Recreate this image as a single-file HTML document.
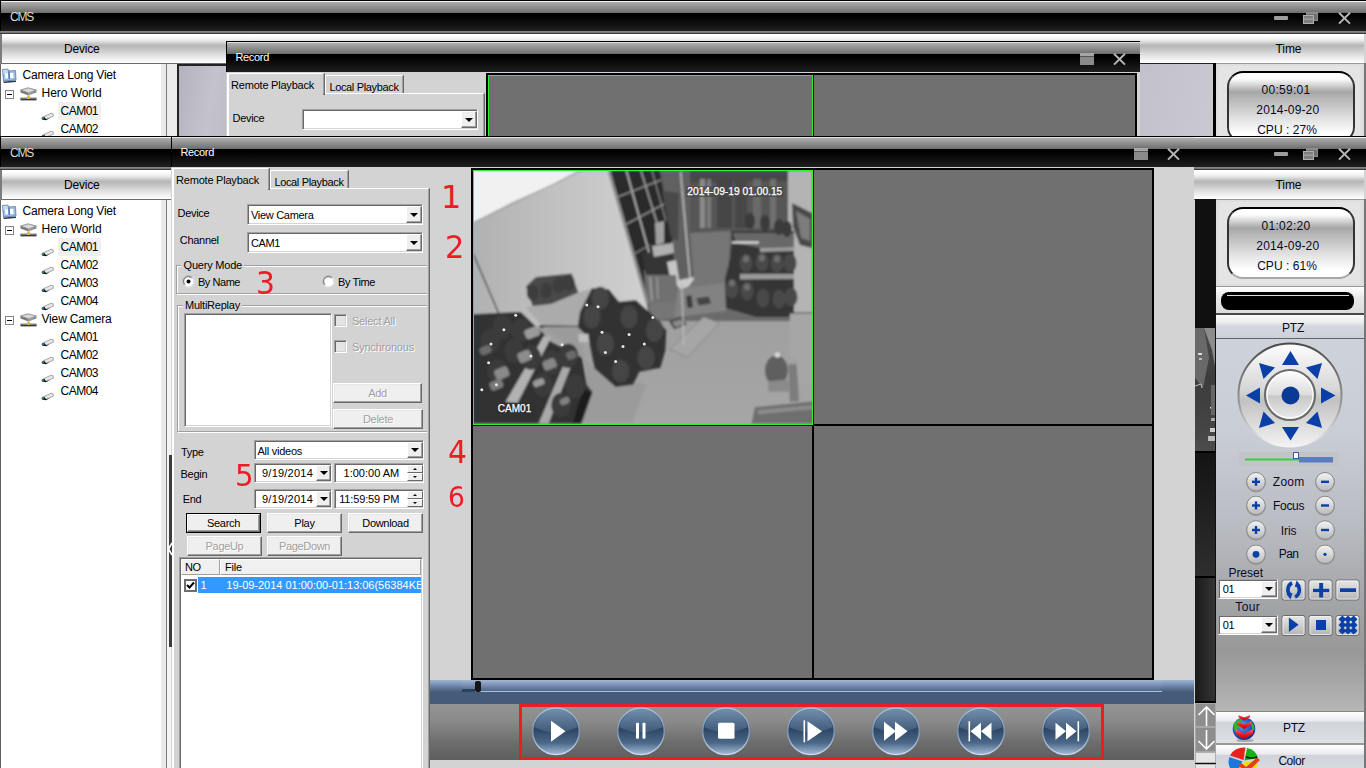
<!DOCTYPE html><html><head><meta charset="utf-8"><title>CMS</title><style>
html,body{margin:0;padding:0}
body{width:1366px;height:768px;overflow:hidden;position:relative;background:#d3d3d3;font-family:"Liberation Sans",sans-serif}
.t{position:absolute;white-space:pre}
.a{position:absolute}
.win{position:absolute;left:0;width:1366px;overflow:hidden}
.cmstb{position:absolute;left:0;top:0;width:1366px;height:34px;background:linear-gradient(to bottom,#000 0,#000 1px,#f4f4f4 1px,#f4f4f4 2px,#aeaeae 2px,#6c6c6c 13px,#000 13px,#000 16px,#1f1f1f 31px,#8c8c8c 31px,#6e6e6e 33px,#3a3a3a 33px,#3a3a3a 34px)}
.rectb{position:absolute;height:31px;background:linear-gradient(to bottom,#000 0,#000 1px,#e0e0e0 1px,#e0e0e0 2px,#aeaeae 2px,#6c6c6c 13px,#000 13px,#000 16px,#1f1f1f 31px)}
.hdr{position:absolute;height:29px;background:linear-gradient(to bottom,#fff 0,#fff 2px,#ececec 6px,#b6b6b6 11.5px,#bcbcbc 13px,#e4e4e4 22px,#f8f8f8 27px,#fff 29px)}
.combo{position:absolute;background:#fff;box-sizing:border-box;border:1px solid;border-color:#a0a0a0 #fff #fff #a0a0a0;box-shadow:inset 1px 1px 0 #696969, inset -1px -1px 0 #d3d3d3}
.cbtn{position:absolute;right:0px;top:1px;bottom:1px;width:16px;background:#efefef;box-sizing:border-box;border:1px solid;border-color:#fff #696969 #696969 #fff;box-shadow:inset -1px -1px 0 #a0a0a0}
.cbtn:after{content:"";position:absolute;left:3px;top:50%;margin-top:-2px;border:4px solid transparent;border-top:4px solid #000;border-bottom:0;width:0;height:0}
.btn{position:absolute;background:#efefef;box-sizing:border-box;border:1px solid;border-color:#fff #696969 #696969 #fff;box-shadow:inset -1px -1px 0 #a0a0a0, inset 1px 1px 0 #e8e8e8}
.sunk{position:absolute;background:#fff;box-sizing:border-box;border:1px solid;border-color:#a0a0a0 #fff #fff #a0a0a0;box-shadow:inset 1px 1px 0 #696969, inset -1px -1px 0 #d3d3d3}
.grp{position:absolute;box-sizing:border-box;border:1px solid #fff;box-shadow:inset 1px 1px 0 #a0a0a0;border-top-color:#a0a0a0;border-left-color:#a0a0a0;}
.grp2{position:absolute;box-sizing:border-box;border:1px solid #a0a0a0;box-shadow:1px 1px 0 #fff, inset 1px 1px 0 #fff}
</style></head><body>
<div class="win" style="top:0px;height:136px;background:#d3d3d3">
<div class="cmstb"></div>
<div style="position:absolute;left:0px;top:1px;width:1px;height:30px;background:#000"></div>
<div class="t" style="left:10.00px;top:10.84px;font:12px/1 'Liberation Sans',sans-serif;color:#dcdcdc;letter-spacing:-1.224px;">CMS</div>
<div style="position:absolute;left:1274px;top:16px;width:14px;height:4px;background:#9d9d9d;border-radius:1px"></div><svg class="a" style="left:1302px;top:11px" width="17" height="14" viewBox="0 0 17 14"><rect x="4.5" y="1.5" width="11" height="8" fill="#6e6e6e" stroke="#8c8c8c"/><rect x="4" y="1" width="12" height="2" fill="#8c8c8c"/><rect x="1.5" y="4.5" width="10" height="8" fill="#7e7e7e" stroke="#b0b0b0"/><rect x="2" y="7.6" width="9" height="1" fill="#b0b0b0"/></svg><svg class="a" style="left:1338px;top:12px" width="13" height="13" viewBox="0 0 13 13"><path d="M1 0.8 L12 11.6 M12 0.8 L1 11.6" stroke="#b6b6b6" stroke-width="2" fill="none"/></svg>
<div style="position:absolute;left:0px;top:34px;width:2px;height:30px;background:#7c7c7c"></div>
<div class="hdr" style="left:2px;top:34px;width:1362px"></div>
<div style="position:absolute;left:2px;top:63px;width:1362px;height:1px;background:#6a6a6a"></div>
<div class="t" style="left:1275.50px;top:43.14px;font:12px/1 'Liberation Sans',sans-serif;color:#000;letter-spacing:-0.059px;">Time</div>
<div class="t" style="left:63.95px;top:43.14px;font:12px/1 'Liberation Sans',sans-serif;color:#000;letter-spacing:-0.198px;">Device</div>
<div style="position:absolute;left:0px;top:64px;width:1px;height:1000px;background:#606060"></div>
<div style="position:absolute;left:1px;top:64px;width:160px;height:1000px;background:#fff"></div>
<div style="position:absolute;left:161px;top:64px;width:5px;height:1000px;background:#e9e9e9"></div>
<div style="position:absolute;left:166px;top:64px;width:1px;height:1000px;background:#7a7a7a"></div>
<div style="position:absolute;left:167px;top:64px;width:4px;height:1000px;background:#f4f4f4"></div>
<svg class="a" style="left:1px;top:67.9px" width="16" height="15" viewBox="0 0 16 15"><path d="M2 13.5 L15 12.5 L15 14 L3 15Z" fill="#26364a"/><path d="M1.5 1.5 L7 1 L7.5 3 L14.5 2.5 L15 12 L2.5 13 Z" fill="#9cbce0" stroke="#5a7aa6" stroke-width=".8"/><path d="M2 2 L6.5 1.5 L7 5 L2.3 6Z" fill="#c4d8f0"/><rect x="4.2" y="5.5" width="3" height="5" fill="#fff" transform="rotate(-4 5 8)"/><rect x="9" y="4.8" width="3.4" height="5.4" fill="#fff" transform="rotate(-4 10 8)"/><rect x="7.4" y="3.5" width="1.4" height="7.5" fill="#4a6fa8" transform="rotate(-4 8 7)"/></svg>
<div class="t" style="left:22.60px;top:69.24px;font:12px/1 'Liberation Sans',sans-serif;color:#000;letter-spacing:-0.195px;">Camera Long Viet</div>
<div style="position:absolute;left:5px;top:90.4px;width:9px;height:9px;box-sizing:border-box;border:1px solid #848484;background:#fff"></div>
<div style="position:absolute;left:7px;top:94.4px;width:5px;height:1px;background:#000"></div>
<svg class="a" style="left:20px;top:87.4px" width="17" height="14" viewBox="0 0 17 14"><path d="M0.5 3 L8 0.8 L16.5 3 L8.5 6 Z" fill="#d8d8d8" stroke="#777" stroke-width=".7"/><path d="M0.5 3 L8.5 6 L8.5 8.6 L0.5 5.4 Z" fill="#7a7a7a"/><path d="M8.5 6 L16.5 3 L16.5 5.4 L8.5 8.6 Z" fill="#9a9a9a"/><rect x="13.5" y="4.2" width="2" height="1.6" fill="#7080c0"/><rect x="7.4" y="8.4" width="2.2" height="3" fill="#e8b020"/><rect x="0.5" y="10.8" width="16" height="2.6" fill="#3c3c3c"/><rect x="0.5" y="10.8" width="16" height="1" fill="#8a8a8a"/><rect x="7.4" y="10.4" width="2.2" height="1.6" fill="#f0c040"/></svg>
<div class="t" style="left:41.50px;top:87.24px;font:12px/1 'Liberation Sans',sans-serif;color:#000;letter-spacing:-0.037px;">Hero World</div>
<div style="position:absolute;left:58px;top:102.4px;width:43px;height:18px;background:#f0f0f0"></div>
<svg class="a" style="left:40.5px;top:111.9px" width="14" height="9" viewBox="0 0 14 9"><path d="M3 4.4 L10.2 1.2 L12.2 1.8 L12.4 4.2 L5.2 7.2 L2.4 7 Z" fill="#e6e6e6" stroke="#777" stroke-width=".6"/><path d="M0.6 5.8 L3 4.6 L5.2 7.2 L9 5.9 L5 8.2 L1 7.6 Z" fill="#141414"/><rect x="1.2" y="5.3" width="2" height="1.5" fill="#1fa4b4"/></svg>
<div class="t" style="left:60.50px;top:105.24px;font:12px/1 'Liberation Sans',sans-serif;color:#000;letter-spacing:-0.503px;">CAM01</div>
<svg class="a" style="left:40.5px;top:129.9px" width="14" height="9" viewBox="0 0 14 9"><path d="M3 4.4 L10.2 1.2 L12.2 1.8 L12.4 4.2 L5.2 7.2 L2.4 7 Z" fill="#e6e6e6" stroke="#777" stroke-width=".6"/><path d="M0.6 5.8 L3 4.6 L5.2 7.2 L9 5.9 L5 8.2 L1 7.6 Z" fill="#141414"/><rect x="1.2" y="5.3" width="2" height="1.5" fill="#1fa4b4"/></svg>
<div class="t" style="left:60.50px;top:123.24px;font:12px/1 'Liberation Sans',sans-serif;color:#000;letter-spacing:-0.503px;">CAM02</div>
<div style="position:absolute;left:1140px;top:63px;width:73px;height:600px;background:linear-gradient(100deg,#c2c0ca,#cccad2 60%,#bdbbc5)"></div>
<div style="position:absolute;left:1140px;top:63px;width:76px;height:1px;background:#222"></div>
<div style="position:absolute;left:1213px;top:63px;width:3px;height:600px;background:#000"></div>
<div style="position:absolute;left:1216px;top:63px;width:148px;height:88px;background:#dedede;box-sizing:border-box;border-top:1px solid #9a9a9a;border-bottom:1px solid #9a9a9a"></div>
<div style="position:absolute;left:1219px;top:66px;width:142px;height:82px;background:#e4e4e4"></div>
<div style="position:absolute;left:1364px;top:63px;width:2px;height:600px;background:#777"></div>
<div style="position:absolute;left:1227px;top:71px;width:128px;height:72px;box-sizing:border-box;border:2px solid;border-color:#000 #333 #a8a8a8 #333;border-radius:16px;background:linear-gradient(to bottom,#fff 0,#fff 8%,#a6a6a6 28%,#b4b4b4 36%,#e6e6e6 70%,#fff 90%)"></div>
<div class="t" style="left:1261.50px;top:83.74px;font:12px/1 'Liberation Sans',sans-serif;color:#0a0a1e;letter-spacing:0.285px;">00:59:01</div>
<div class="t" style="left:1256.30px;top:104.24px;font:12px/1 'Liberation Sans',sans-serif;color:#0a0a1e;letter-spacing:0.161px;">2014-09-20</div>
<div class="t" style="left:1257.15px;top:123.84px;font:12px/1 'Liberation Sans',sans-serif;color:#0a0a1e;letter-spacing:0.038px;">CPU : 27%</div>
<div style="position:absolute;left:167px;top:64px;width:10px;height:100px;background:#ececec"></div>
<div style="position:absolute;left:177px;top:64px;width:60px;height:100px;background:linear-gradient(100deg,#b4b2be,#c4c2cc 50%,#bab8c2);box-sizing:border-box;border-left:2px solid #222;border-top:2px solid #222"></div>
<div class="a" style="left:226px;top:41px;width:914px;height:200px;background:#d3d3d3;overflow:hidden">
<div class="rectb" style="left:0;top:0;width:914px"></div>
<div style="position:absolute;left:0px;top:0px;width:1px;height:31px;background:#000"></div>
<div class="t" style="left:9.40px;top:10.69px;font:11px/1 'Liberation Sans',sans-serif;color:#fff;letter-spacing:-0.311px;">Record</div>
<svg class="a" style="left:854px;top:12px" width="14" height="12" viewBox="0 0 14 12"><rect x="0" y="0" width="14" height="12" fill="#8a8a8a"/><rect x="0" y="0" width="14" height="3" fill="#a6a6a6"/><rect x="0" y="3" width="14" height="1" fill="#555"/></svg>
<svg class="a" style="left:887px;top:12px" width="13" height="13" viewBox="0 0 13 13"><path d="M1 0.8 L12 11.6 M12 0.8 L1 11.6" stroke="#b6b6b6" stroke-width="2" fill="none"/></svg>
<div style="position:absolute;left:1px;top:52px;width:258px;height:2000px;box-sizing:border-box;border-left:2px solid #fff;border-top:1px solid #fff;border-right:2px solid #696969;border-right-color:#696969;background:#d3d3d3"></div>
<div style="position:absolute;left:257px;top:53px;width:1px;height:2000px;background:#a0a0a0"></div>
<div style="position:absolute;left:99px;top:34px;width:79px;height:18px;box-sizing:border-box;border-left:1px solid #fff;border-top:1px solid #fff;border-right:2px solid #696969;background:#d3d3d3"></div>
<div style="position:absolute;left:176px;top:35px;width:1px;height:17px;background:#a0a0a0"></div>
<div class="t" style="left:103.40px;top:40.69px;font:11px/1 'Liberation Sans',sans-serif;color:#000;letter-spacing:-0.343px;">Local Playback</div>
<div style="position:absolute;left:1px;top:32px;width:98px;height:22px;box-sizing:border-box;border-left:2px solid #fff;border-top:1px solid #fff;border-right:2px solid #696969;background:#d3d3d3"></div>
<div style="position:absolute;left:97px;top:33px;width:1px;height:20px;background:#a0a0a0"></div>
<div class="t" style="left:5.10px;top:38.69px;font:11px/1 'Liberation Sans',sans-serif;color:#000;letter-spacing:-0.221px;">Remote Playback</div>
<div class="t" style="left:6.50px;top:71.69px;font:11px/1 'Liberation Sans',sans-serif;color:#000;letter-spacing:-0.304px;">Device</div>
<div class="combo" style="left:76px;top:68px;width:176px;height:21px"><div class="cbtn"></div></div>
</div>
<div class="a" style="left:486px;top:73px;width:651px;height:200px;background:#707070;box-sizing:border-box;border:2px solid #000">
<div style="position:absolute;left:324px;top:0px;width:2px;height:196px;background:#000"></div>
<div class="a" style="left:0;top:0;width:325px;height:200px;box-sizing:border-box;border:1px solid #30f030;overflow:hidden">
</div></div>
</div>
<div class="win" style="top:136px;height:632px;background:#d3d3d3">
<div class="cmstb"></div>
<div style="position:absolute;left:0px;top:1px;width:1px;height:30px;background:#000"></div>
<div class="t" style="left:10.00px;top:10.84px;font:12px/1 'Liberation Sans',sans-serif;color:#dcdcdc;letter-spacing:-1.224px;">CMS</div>
<div style="position:absolute;left:1274px;top:16px;width:14px;height:4px;background:#9d9d9d;border-radius:1px"></div><svg class="a" style="left:1302px;top:11px" width="17" height="14" viewBox="0 0 17 14"><rect x="4.5" y="1.5" width="11" height="8" fill="#6e6e6e" stroke="#8c8c8c"/><rect x="4" y="1" width="12" height="2" fill="#8c8c8c"/><rect x="1.5" y="4.5" width="10" height="8" fill="#7e7e7e" stroke="#b0b0b0"/><rect x="2" y="7.6" width="9" height="1" fill="#b0b0b0"/></svg><svg class="a" style="left:1338px;top:12px" width="13" height="13" viewBox="0 0 13 13"><path d="M1 0.8 L12 11.6 M12 0.8 L1 11.6" stroke="#b6b6b6" stroke-width="2" fill="none"/></svg>
<div style="position:absolute;left:0px;top:34px;width:2px;height:30px;background:#7c7c7c"></div>
<div class="hdr" style="left:2px;top:34px;width:1362px"></div>
<div style="position:absolute;left:2px;top:63px;width:1362px;height:1px;background:#6a6a6a"></div>
<div class="t" style="left:1275.50px;top:43.14px;font:12px/1 'Liberation Sans',sans-serif;color:#000;letter-spacing:-0.059px;">Time</div>
<div class="t" style="left:63.95px;top:43.14px;font:12px/1 'Liberation Sans',sans-serif;color:#000;letter-spacing:-0.198px;">Device</div>
<div style="position:absolute;left:0px;top:64px;width:1px;height:1000px;background:#606060"></div>
<div style="position:absolute;left:1px;top:64px;width:160px;height:1000px;background:#fff"></div>
<div style="position:absolute;left:161px;top:64px;width:5px;height:1000px;background:#e9e9e9"></div>
<div style="position:absolute;left:166px;top:64px;width:1px;height:1000px;background:#7a7a7a"></div>
<div style="position:absolute;left:167px;top:64px;width:4px;height:1000px;background:#f4f4f4"></div>
<svg class="a" style="left:1px;top:67.9px" width="16" height="15" viewBox="0 0 16 15"><path d="M2 13.5 L15 12.5 L15 14 L3 15Z" fill="#26364a"/><path d="M1.5 1.5 L7 1 L7.5 3 L14.5 2.5 L15 12 L2.5 13 Z" fill="#9cbce0" stroke="#5a7aa6" stroke-width=".8"/><path d="M2 2 L6.5 1.5 L7 5 L2.3 6Z" fill="#c4d8f0"/><rect x="4.2" y="5.5" width="3" height="5" fill="#fff" transform="rotate(-4 5 8)"/><rect x="9" y="4.8" width="3.4" height="5.4" fill="#fff" transform="rotate(-4 10 8)"/><rect x="7.4" y="3.5" width="1.4" height="7.5" fill="#4a6fa8" transform="rotate(-4 8 7)"/></svg>
<div class="t" style="left:22.60px;top:69.24px;font:12px/1 'Liberation Sans',sans-serif;color:#000;letter-spacing:-0.195px;">Camera Long Viet</div>
<div style="position:absolute;left:5px;top:90.4px;width:9px;height:9px;box-sizing:border-box;border:1px solid #848484;background:#fff"></div>
<div style="position:absolute;left:7px;top:94.4px;width:5px;height:1px;background:#000"></div>
<svg class="a" style="left:20px;top:87.4px" width="17" height="14" viewBox="0 0 17 14"><path d="M0.5 3 L8 0.8 L16.5 3 L8.5 6 Z" fill="#d8d8d8" stroke="#777" stroke-width=".7"/><path d="M0.5 3 L8.5 6 L8.5 8.6 L0.5 5.4 Z" fill="#7a7a7a"/><path d="M8.5 6 L16.5 3 L16.5 5.4 L8.5 8.6 Z" fill="#9a9a9a"/><rect x="13.5" y="4.2" width="2" height="1.6" fill="#7080c0"/><rect x="7.4" y="8.4" width="2.2" height="3" fill="#e8b020"/><rect x="0.5" y="10.8" width="16" height="2.6" fill="#3c3c3c"/><rect x="0.5" y="10.8" width="16" height="1" fill="#8a8a8a"/><rect x="7.4" y="10.4" width="2.2" height="1.6" fill="#f0c040"/></svg>
<div class="t" style="left:41.50px;top:87.24px;font:12px/1 'Liberation Sans',sans-serif;color:#000;letter-spacing:-0.037px;">Hero World</div>
<div style="position:absolute;left:58px;top:102.4px;width:43px;height:18px;background:#f0f0f0"></div>
<svg class="a" style="left:40.5px;top:111.9px" width="14" height="9" viewBox="0 0 14 9"><path d="M3 4.4 L10.2 1.2 L12.2 1.8 L12.4 4.2 L5.2 7.2 L2.4 7 Z" fill="#e6e6e6" stroke="#777" stroke-width=".6"/><path d="M0.6 5.8 L3 4.6 L5.2 7.2 L9 5.9 L5 8.2 L1 7.6 Z" fill="#141414"/><rect x="1.2" y="5.3" width="2" height="1.5" fill="#1fa4b4"/></svg>
<div class="t" style="left:60.50px;top:105.24px;font:12px/1 'Liberation Sans',sans-serif;color:#000;letter-spacing:-0.503px;">CAM01</div>
<svg class="a" style="left:40.5px;top:129.9px" width="14" height="9" viewBox="0 0 14 9"><path d="M3 4.4 L10.2 1.2 L12.2 1.8 L12.4 4.2 L5.2 7.2 L2.4 7 Z" fill="#e6e6e6" stroke="#777" stroke-width=".6"/><path d="M0.6 5.8 L3 4.6 L5.2 7.2 L9 5.9 L5 8.2 L1 7.6 Z" fill="#141414"/><rect x="1.2" y="5.3" width="2" height="1.5" fill="#1fa4b4"/></svg>
<div class="t" style="left:60.50px;top:123.24px;font:12px/1 'Liberation Sans',sans-serif;color:#000;letter-spacing:-0.503px;">CAM02</div>
<svg class="a" style="left:40.5px;top:147.9px" width="14" height="9" viewBox="0 0 14 9"><path d="M3 4.4 L10.2 1.2 L12.2 1.8 L12.4 4.2 L5.2 7.2 L2.4 7 Z" fill="#e6e6e6" stroke="#777" stroke-width=".6"/><path d="M0.6 5.8 L3 4.6 L5.2 7.2 L9 5.9 L5 8.2 L1 7.6 Z" fill="#141414"/><rect x="1.2" y="5.3" width="2" height="1.5" fill="#1fa4b4"/></svg>
<div class="t" style="left:60.50px;top:141.24px;font:12px/1 'Liberation Sans',sans-serif;color:#000;letter-spacing:-0.503px;">CAM03</div>
<svg class="a" style="left:40.5px;top:165.9px" width="14" height="9" viewBox="0 0 14 9"><path d="M3 4.4 L10.2 1.2 L12.2 1.8 L12.4 4.2 L5.2 7.2 L2.4 7 Z" fill="#e6e6e6" stroke="#777" stroke-width=".6"/><path d="M0.6 5.8 L3 4.6 L5.2 7.2 L9 5.9 L5 8.2 L1 7.6 Z" fill="#141414"/><rect x="1.2" y="5.3" width="2" height="1.5" fill="#1fa4b4"/></svg>
<div class="t" style="left:60.50px;top:159.24px;font:12px/1 'Liberation Sans',sans-serif;color:#000;letter-spacing:-0.503px;">CAM04</div>
<div style="position:absolute;left:5px;top:180.4px;width:9px;height:9px;box-sizing:border-box;border:1px solid #848484;background:#fff"></div>
<div style="position:absolute;left:7px;top:184.4px;width:5px;height:1px;background:#000"></div>
<svg class="a" style="left:20px;top:177.4px" width="17" height="14" viewBox="0 0 17 14"><path d="M0.5 3 L8 0.8 L16.5 3 L8.5 6 Z" fill="#d8d8d8" stroke="#777" stroke-width=".7"/><path d="M0.5 3 L8.5 6 L8.5 8.6 L0.5 5.4 Z" fill="#7a7a7a"/><path d="M8.5 6 L16.5 3 L16.5 5.4 L8.5 8.6 Z" fill="#9a9a9a"/><rect x="13.5" y="4.2" width="2" height="1.6" fill="#7080c0"/><rect x="7.4" y="8.4" width="2.2" height="3" fill="#e8b020"/><rect x="0.5" y="10.8" width="16" height="2.6" fill="#3c3c3c"/><rect x="0.5" y="10.8" width="16" height="1" fill="#8a8a8a"/><rect x="7.4" y="10.4" width="2.2" height="1.6" fill="#f0c040"/></svg>
<div class="t" style="left:41.50px;top:177.24px;font:12px/1 'Liberation Sans',sans-serif;color:#000;letter-spacing:-0.165px;">View Camera</div>
<svg class="a" style="left:40.5px;top:201.9px" width="14" height="9" viewBox="0 0 14 9"><path d="M3 4.4 L10.2 1.2 L12.2 1.8 L12.4 4.2 L5.2 7.2 L2.4 7 Z" fill="#e6e6e6" stroke="#777" stroke-width=".6"/><path d="M0.6 5.8 L3 4.6 L5.2 7.2 L9 5.9 L5 8.2 L1 7.6 Z" fill="#141414"/><rect x="1.2" y="5.3" width="2" height="1.5" fill="#1fa4b4"/></svg>
<div class="t" style="left:60.50px;top:195.24px;font:12px/1 'Liberation Sans',sans-serif;color:#000;letter-spacing:-0.503px;">CAM01</div>
<svg class="a" style="left:40.5px;top:219.9px" width="14" height="9" viewBox="0 0 14 9"><path d="M3 4.4 L10.2 1.2 L12.2 1.8 L12.4 4.2 L5.2 7.2 L2.4 7 Z" fill="#e6e6e6" stroke="#777" stroke-width=".6"/><path d="M0.6 5.8 L3 4.6 L5.2 7.2 L9 5.9 L5 8.2 L1 7.6 Z" fill="#141414"/><rect x="1.2" y="5.3" width="2" height="1.5" fill="#1fa4b4"/></svg>
<div class="t" style="left:60.50px;top:213.24px;font:12px/1 'Liberation Sans',sans-serif;color:#000;letter-spacing:-0.503px;">CAM02</div>
<svg class="a" style="left:40.5px;top:237.9px" width="14" height="9" viewBox="0 0 14 9"><path d="M3 4.4 L10.2 1.2 L12.2 1.8 L12.4 4.2 L5.2 7.2 L2.4 7 Z" fill="#e6e6e6" stroke="#777" stroke-width=".6"/><path d="M0.6 5.8 L3 4.6 L5.2 7.2 L9 5.9 L5 8.2 L1 7.6 Z" fill="#141414"/><rect x="1.2" y="5.3" width="2" height="1.5" fill="#1fa4b4"/></svg>
<div class="t" style="left:60.50px;top:231.24px;font:12px/1 'Liberation Sans',sans-serif;color:#000;letter-spacing:-0.503px;">CAM03</div>
<svg class="a" style="left:40.5px;top:255.89999999999998px" width="14" height="9" viewBox="0 0 14 9"><path d="M3 4.4 L10.2 1.2 L12.2 1.8 L12.4 4.2 L5.2 7.2 L2.4 7 Z" fill="#e6e6e6" stroke="#777" stroke-width=".6"/><path d="M0.6 5.8 L3 4.6 L5.2 7.2 L9 5.9 L5 8.2 L1 7.6 Z" fill="#141414"/><rect x="1.2" y="5.3" width="2" height="1.5" fill="#1fa4b4"/></svg>
<div class="t" style="left:60.50px;top:249.24px;font:12px/1 'Liberation Sans',sans-serif;color:#000;letter-spacing:-0.503px;">CAM04</div>
<div style="position:absolute;left:1195px;top:63px;width:21px;height:600px;background:#101010"></div>
<div style="position:absolute;left:1195px;top:192px;width:20px;height:123px;background:linear-gradient(to bottom,#4c4c4c,#3c3c3c 40%,#444 80%,#4c4c4c);overflow:hidden"><svg class="a" style="left:0;top:0" width="20" height="123" viewBox="0 0 20 123"><polygon points="9,0 20,0 20,38 17,22" fill="#8c8c8c"/><polygon points="0,0 9,0 14,30 8,60 0,50" fill="#696969"/><rect x="3" y="25" width="4" height="2" fill="#ddd"/><rect x="4" y="30" width="3" height="2" fill="#bbb"/><rect x="15" y="79" width="3" height="1.5" fill="#eee"/><rect x="16" y="57" width="4" height="30" fill="#666"/><rect x="15" y="100" width="5" height="4" fill="#ccc"/><rect x="13" y="108" width="7" height="5" fill="#bbb"/><rect x="16" y="90" width="4" height="3" fill="#aaa"/><path d="M0 58 L6 56 L7 60" stroke="#bbb" fill="none"/></svg></div>
<div style="position:absolute;left:1195px;top:315px;width:20px;height:2px;background:#000"></div>
<div style="position:absolute;left:1195px;top:317px;width:20px;height:123px;background:linear-gradient(to bottom,#141414,#2e2e2e)"></div>
<div style="position:absolute;left:1195px;top:440px;width:20px;height:2px;background:#000"></div>
<div style="position:absolute;left:1195px;top:442px;width:20px;height:123px;background:linear-gradient(to right,#1a1a1a,#343434)"></div>
<div style="position:absolute;left:1195px;top:565px;width:20px;height:2px;background:#000"></div>
<div style="position:absolute;left:1195px;top:567px;width:21px;height:24px;background:#8e8e8e;box-sizing:border-box;border:1px solid #a8a8a8"><svg class="a" style="left:0;top:0" width="21" height="24" viewBox="0 0 21 24"><path d="M10.5 3 V22 M2.5 11 L10.5 3 L18.5 11" stroke="#fff" stroke-width="1.6" fill="none"/></svg></div>
<div style="position:absolute;left:1195px;top:591px;width:21px;height:25px;background:#8e8e8e;box-sizing:border-box;border:1px solid #a8a8a8"><svg class="a" style="left:0;top:0;transform:scaleY(-1)" width="21" height="24" viewBox="0 0 21 24"><path d="M10.5 3 V22 M2.5 11 L10.5 3 L18.5 11" stroke="#fff" stroke-width="1.6" fill="none"/></svg></div>
<div style="position:absolute;left:1195px;top:616px;width:21px;height:11px;background:#e6e6e6;box-sizing:border-box;border:1px solid #b0b0b0"></div>
<div style="position:absolute;left:1195px;top:628px;width:21px;height:11px;background:#e6e6e6;box-sizing:border-box;border:1px solid #b0b0b0"></div>
<div style="position:absolute;left:1216px;top:63px;width:148px;height:88px;background:#dedede;box-sizing:border-box;border-top:1px solid #9a9a9a;border-bottom:1px solid #9a9a9a"></div>
<div style="position:absolute;left:1219px;top:66px;width:142px;height:82px;background:#e4e4e4"></div>
<div style="position:absolute;left:1364px;top:63px;width:2px;height:600px;background:#777"></div>
<div style="position:absolute;left:1227px;top:71px;width:128px;height:72px;box-sizing:border-box;border:2px solid;border-color:#000 #333 #a8a8a8 #333;border-radius:16px;background:linear-gradient(to bottom,#fff 0,#fff 8%,#a6a6a6 28%,#b4b4b4 36%,#e6e6e6 70%,#fff 90%)"></div>
<div class="t" style="left:1261.50px;top:83.74px;font:12px/1 'Liberation Sans',sans-serif;color:#0a0a1e;letter-spacing:0.285px;">01:02:20</div>
<div class="t" style="left:1256.30px;top:104.24px;font:12px/1 'Liberation Sans',sans-serif;color:#0a0a1e;letter-spacing:0.161px;">2014-09-20</div>
<div class="t" style="left:1257.15px;top:123.84px;font:12px/1 'Liberation Sans',sans-serif;color:#0a0a1e;letter-spacing:0.038px;">CPU : 61%</div>
<div style="position:absolute;left:1216px;top:151px;width:148px;height:26px;background:linear-gradient(to bottom,#fff,#e8e8e8 40%,#dcdcdc);border-bottom:1px solid #aaa"></div>
<div style="position:absolute;left:1216px;top:177px;width:148px;height:2px;background:#484848"></div>
<div style="position:absolute;left:1221px;top:156px;width:133px;height:18px;background:#000;border-radius:8px"></div>
<div style="position:absolute;left:1227px;top:159px;width:122px;height:1px;background:#ddd"></div>
<div style="position:absolute;left:1216px;top:179px;width:148px;height:23px;background:linear-gradient(to bottom,#fafafa 0,#eceef0 30%,#d4d8de 50%,#cdd1d8 100%)"></div>
<div style="position:absolute;left:1216px;top:202px;width:148px;height:1px;background:#5c646c"></div>
<div class="t" style="left:1282.00px;top:185.74px;font:12px/1 'Liberation Sans',sans-serif;color:#0a0a1e;letter-spacing:-0.224px;">PTZ</div>
<div style="position:absolute;left:1216px;top:203px;width:148px;height:372px;background:linear-gradient(to bottom,#ced2da 0,#c9cdd5 25%,#b9bcc2 50%,#a4a5a8 70%,#989898 84%,#b6b6b6 100%)"></div>
<svg class="a" style="left:1216px;top:203px" width="148" height="372" viewBox="0 0 148 372"><defs><linearGradient id="dg" x1="0" y1="0" x2="0" y2="1"><stop offset="0" stop-color="#fdfdfd"/><stop offset="0.45" stop-color="#d6d6d6"/><stop offset="0.55" stop-color="#c2c2c2"/><stop offset="1" stop-color="#f2f2f2"/></linearGradient><linearGradient id="dr" x1="0" y1="0" x2="0" y2="1"><stop offset="0" stop-color="#4a4a4a"/><stop offset="0.6" stop-color="#9a9a9a"/><stop offset="1" stop-color="#f4f4f4"/></linearGradient><linearGradient id="ig" x1="0" y1="0" x2="0" y2="1"><stop offset="0" stop-color="#ffffff"/><stop offset="0.5" stop-color="#dcdcdc"/><stop offset="0.52" stop-color="#c8c8c8"/><stop offset="1" stop-color="#ececec"/></linearGradient><linearGradient id="rb" x1="0" y1="0" x2="0" y2="1"><stop offset="0" stop-color="#f4f4f4"/><stop offset="1" stop-color="#b8b8b8"/></linearGradient><linearGradient id="sq" x1="0" y1="0" x2="0" y2="1"><stop offset="0" stop-color="#e8e8e8"/><stop offset="1" stop-color="#b4b4b4"/></linearGradient></defs><circle cx="74" cy="56" r="51.5" fill="url(#dg)" stroke="url(#dr)" stroke-width="2"/><circle cx="74" cy="56" r="25" fill="url(#ig)" stroke="#6c6c6c" stroke-width="2.2"/><circle cx="74" cy="56" r="23" fill="none" stroke="#fff" stroke-width="1.2"/><circle cx="74.5" cy="56.5" r="9" fill="#0a3a96"/><polygon points="74.5,12.0 66.0,26.0 83.0,26.0" fill="#0b3fa8"/><polygon points="74.5,101.5 66.0,88.0 83.0,88.0" fill="#0b3fa8"/><polygon points="30.0,56.5 44.0,48.5 44.0,64.5" fill="#0b3fa8"/><polygon points="119.5,56.5 105.0,48.5 105.0,64.5" fill="#0b3fa8"/><polygon points="43.0,24.0 59.0,28.5 47.5,40.0" fill="#0b3fa8"/><polygon points="106.0,24.0 90.0,28.5 101.5,40.0" fill="#0b3fa8"/><polygon points="43.0,89.0 59.0,84.0 47.5,72.5" fill="#0b3fa8"/><polygon points="106.0,89.0 90.0,84.0 101.5,72.5" fill="#0b3fa8"/><rect x="23" y="113" width="100" height="14" fill="#c2c4c8"/><rect x="29" y="119.5" width="54" height="2" fill="#33d23a"/><rect x="83" y="118" width="34" height="5.5" fill="#5a7cc0"/><rect x="77.5" y="113.5" width="5" height="6" fill="#fff" stroke="#3a5aa8" stroke-width="1"/><circle cx="40" cy="143.5" r="10" fill="#888" opacity=".55"/><circle cx="40" cy="142.8" r="9.3" fill="url(#rb)" stroke="#8a8a8a" stroke-width="1"/><rect x="36" y="141.60000000000002" width="8" height="2.4" fill="#0b3fa8"/><rect x="38.8" y="138.8" width="2.4" height="8" fill="#0b3fa8"/><circle cx="109" cy="143.5" r="10" fill="#888" opacity=".55"/><circle cx="109" cy="142.8" r="9.3" fill="url(#rb)" stroke="#8a8a8a" stroke-width="1"/><rect x="105" y="141.60000000000002" width="8" height="2.4" fill="#0b3fa8"/><circle cx="40" cy="167.2" r="10" fill="#888" opacity=".55"/><circle cx="40" cy="166.5" r="9.3" fill="url(#rb)" stroke="#8a8a8a" stroke-width="1"/><rect x="36" y="165.3" width="8" height="2.4" fill="#0b3fa8"/><rect x="38.8" y="162.5" width="2.4" height="8" fill="#0b3fa8"/><circle cx="109" cy="167.2" r="10" fill="#888" opacity=".55"/><circle cx="109" cy="166.5" r="9.3" fill="url(#rb)" stroke="#8a8a8a" stroke-width="1"/><rect x="105" y="165.3" width="8" height="2.4" fill="#0b3fa8"/><circle cx="40" cy="191.7" r="10" fill="#888" opacity=".55"/><circle cx="40" cy="191" r="9.3" fill="url(#rb)" stroke="#8a8a8a" stroke-width="1"/><rect x="36" y="189.8" width="8" height="2.4" fill="#0b3fa8"/><rect x="38.8" y="187" width="2.4" height="8" fill="#0b3fa8"/><circle cx="109" cy="191.7" r="10" fill="#888" opacity=".55"/><circle cx="109" cy="191" r="9.3" fill="url(#rb)" stroke="#8a8a8a" stroke-width="1"/><rect x="105" y="189.8" width="8" height="2.4" fill="#0b3fa8"/><circle cx="40" cy="215.99999999999994" r="10" fill="#888" opacity=".55"/><circle cx="40" cy="215.29999999999995" r="9.3" fill="url(#rb)" stroke="#8a8a8a" stroke-width="1"/><circle cx="40" cy="215.29999999999995" r="3.4" fill="#0b3fa8"/><circle cx="109" cy="215.99999999999994" r="10" fill="#888" opacity=".55"/><circle cx="109" cy="215.29999999999995" r="9.3" fill="url(#rb)" stroke="#8a8a8a" stroke-width="1"/><circle cx="109" cy="215.29999999999995" r="1.6" fill="#0b3fa8"/><rect x="66.0" y="241.0" width="23" height="20" rx="2" fill="url(#sq)" stroke="#6c6c6c"/><rect x="67.0" y="242.0" width="21" height="18" rx="1.5" fill="none" stroke="#f4f4f4" stroke-opacity=".8"/><rect x="66.0" y="276.5" width="23" height="20" rx="2" fill="url(#sq)" stroke="#6c6c6c"/><rect x="67.0" y="277.5" width="21" height="18" rx="1.5" fill="none" stroke="#f4f4f4" stroke-opacity=".8"/><rect x="93.0" y="241.0" width="23" height="20" rx="2" fill="url(#sq)" stroke="#6c6c6c"/><rect x="94.0" y="242.0" width="21" height="18" rx="1.5" fill="none" stroke="#f4f4f4" stroke-opacity=".8"/><rect x="93.0" y="276.5" width="23" height="20" rx="2" fill="url(#sq)" stroke="#6c6c6c"/><rect x="94.0" y="277.5" width="21" height="18" rx="1.5" fill="none" stroke="#f4f4f4" stroke-opacity=".8"/><rect x="120.0" y="241.0" width="23" height="20" rx="2" fill="url(#sq)" stroke="#6c6c6c"/><rect x="121.0" y="242.0" width="21" height="18" rx="1.5" fill="none" stroke="#f4f4f4" stroke-opacity=".8"/><rect x="120.0" y="276.5" width="23" height="20" rx="2" fill="url(#sq)" stroke="#6c6c6c"/><rect x="121.0" y="277.5" width="21" height="18" rx="1.5" fill="none" stroke="#f4f4f4" stroke-opacity=".8"/><g transform="translate(77.59999999999991,251)" fill="none" stroke="#0b3fa8" stroke-width="3.6"><path d="M-1.5 -7 A6.2 7.2 0 0 0 -3.8 5"/><path d="M1.5 7 A6.2 7.2 0 0 0 3.8 -5"/></g><polygon points="70.5,255.0 76.5,254.0 74.5,260.5" fill="#0b3fa8"/><polygon points="84.8,247.0 78.7,248.0 80.7,241.5" fill="#0b3fa8"/><rect x="97" y="249.79999999999995" width="16.2" height="3.3" fill="#0b3fa8"/><rect x="103.20000000000005" y="244" width="3.9" height="14.5" fill="#0b3fa8"/><rect x="124" y="249.29999999999995" width="16" height="3.7" fill="#0b3fa8"/><polygon points="72.9,278.4 72.9,293.0 82.6,285.7" fill="#0b3fa8"/><rect x="100" y="281" width="10" height="10" fill="#0b3fa8"/><polygon points="122.5,280.3 126.4,276.4 130.3,280.3 126.4,284.2" fill="#0b3fa8"/><polygon points="128.1,280.3 132.0,276.4 135.9,280.3 132.0,284.2" fill="#0b3fa8"/><polygon points="133.7,280.3 137.6,276.4 141.5,280.3 137.6,284.2" fill="#0b3fa8"/><polygon points="122.5,286.0 126.4,282.1 130.3,286.0 126.4,289.9" fill="#0b3fa8"/><polygon points="128.1,286.0 132.0,282.1 135.9,286.0 132.0,289.9" fill="#0b3fa8"/><polygon points="133.7,286.0 137.6,282.1 141.5,286.0 137.6,289.9" fill="#0b3fa8"/><polygon points="122.5,291.7 126.4,287.8 130.3,291.7 126.4,295.6" fill="#0b3fa8"/><polygon points="128.1,291.7 132.0,287.8 135.9,291.7 132.0,295.6" fill="#0b3fa8"/><polygon points="133.7,291.7 137.6,287.8 141.5,291.7 137.6,295.6" fill="#0b3fa8"/></svg><div class="t" style="left:1272.85px;top:339.54px;font:12px/1 'Liberation Sans',sans-serif;color:#0a0a1e;letter-spacing:0.203px;">Zoom</div><div class="t" style="left:1273.10px;top:364.14px;font:12px/1 'Liberation Sans',sans-serif;color:#0a0a1e;letter-spacing:-0.338px;">Focus</div><div class="t" style="left:1280.85px;top:388.74px;font:12px/1 'Liberation Sans',sans-serif;color:#0a0a1e;letter-spacing:-0.125px;">Iris</div><div class="t" style="left:1278.85px;top:411.94px;font:12px/1 'Liberation Sans',sans-serif;color:#0a0a1e;letter-spacing:-0.620px;">Pan</div><div class="t" style="left:1228.40px;top:430.74px;font:12px/1 'Liberation Sans',sans-serif;color:#0a0a1e;letter-spacing:-0.015px;">Preset</div><div class="t" style="left:1235.30px;top:465.34px;font:12px/1 'Liberation Sans',sans-serif;color:#0a0a1e;letter-spacing:0.339px;">Tour</div><div class="combo" style="left:1218px;top:443px;width:60px;height:20px"><div class="cbtn"></div><div class="t" style="left:3.70px;top:3.79px;font:11px/1 'Liberation Sans',sans-serif;color:#000;letter-spacing:-0.306px;">01</div></div><div class="combo" style="left:1218px;top:479px;width:60px;height:20px"><div class="cbtn"></div><div class="t" style="left:3.70px;top:3.79px;font:11px/1 'Liberation Sans',sans-serif;color:#000;letter-spacing:-0.306px;">01</div></div>
<div style="position:absolute;left:1216px;top:575px;width:148px;height:1px;background:#888"></div>
<div style="position:absolute;left:1216px;top:576px;width:148px;height:31px;background:linear-gradient(to bottom,#fff 0,#e8eaee 30%,#d0d3da 32%,#d6d9de 70%,#e0e2e4 100%)"></div>
<div style="position:absolute;left:1216px;top:607px;width:148px;height:2px;background:#999"></div>
<div style="position:absolute;left:1216px;top:609px;width:148px;height:31px;background:linear-gradient(to bottom,#fff 0,#e8eaee 30%,#d0d3da 32%,#d6d9de 70%,#e0e2e4 100%)"></div>
<svg class="a" style="left:1230px;top:577px" width="30" height="30" viewBox="0 0 30 30"><defs><radialGradient id="gl" cx=".4" cy=".35" r=".7"><stop offset="0" stop-color="#5aa0f0"/><stop offset=".6" stop-color="#1c56c8"/><stop offset="1" stop-color="#0a2a80"/></radialGradient><linearGradient id="rd" x1="0" y1="0" x2="0" y2="1"><stop offset="0" stop-color="#ff6a6a"/><stop offset=".5" stop-color="#f01818"/><stop offset="1" stop-color="#c00000"/></linearGradient></defs><ellipse cx="15" cy="27.5" rx="9" ry="1.6" fill="#888" opacity=".6"/><circle cx="14" cy="15.8" r="11.3" fill="url(#gl)"/><path d="M4 11 Q8 6 12 6 Q10 10 11 14 Q7 15 5 19 Q3 15 4 11Z" fill="#2fb52f"/><path d="M20 8 Q25 11 24.5 18 Q22 17 21.5 13 Z" fill="#2fb52f"/><path d="M8.5 2 L14.3 4.5 L20 2 L20 4.2 L14.3 7.8 L8.5 4.2Z" fill="url(#rd)"/><path d="M7 8 L14.3 11.5 L21.5 8 L21.5 11.5 L14.3 16.2 L7 11.5Z" fill="url(#rd)"/><path d="M5.5 16 L14.3 20.5 L23 16 L23 20.5 L14.3 26.5 L5.5 20.5Z" fill="url(#rd)"/></svg>
<svg class="a" style="left:1227px;top:610px" width="34" height="30" viewBox="0 0 34 30"><path d="M16.5 14 L3 9.5 A15 13 0 0 1 18.5 1.5 Z" fill="#e82020"/><path d="M17.5 14.5 L20 2 A14 12 0 0 1 31 12 Z" fill="#18b018"/><path d="M15.5 15.5 L2.5 11 A15 14 0 0 0 9 28 Z" fill="#1c78d8"/><path d="M17 16.5 L30.5 14 A14 14 0 0 1 11 28.5 Z" fill="#f0dc10"/><path d="M11 19 L15 17.5 L19 21 L30 11.5 L33 14 L19.5 27 Z" fill="#e04020"/><path d="M19 11 Q25 13 30 11" stroke="#111" stroke-width="1.6" fill="none"/></svg>
<div class="t" style="left:1283.00px;top:586.34px;font:12px/1 'Liberation Sans',sans-serif;color:#0a0a1e;letter-spacing:-0.291px;">PTZ</div>
<div class="t" style="left:1278.40px;top:618.74px;font:12px/1 'Liberation Sans',sans-serif;color:#0a0a1e;letter-spacing:-0.458px;">Color</div>
<div class="a" style="left:171px;top:0px;width:1023px;height:632px;background:#d3d3d3;overflow:hidden">
<div class="rectb" style="left:0;top:0;width:1023px"></div>
<div style="position:absolute;left:0px;top:0px;width:1px;height:31px;background:#000"></div>
<div class="t" style="left:9.40px;top:10.69px;font:11px/1 'Liberation Sans',sans-serif;color:#fff;letter-spacing:-0.311px;">Record</div>
<svg class="a" style="left:963px;top:12px" width="14" height="12" viewBox="0 0 14 12"><rect x="0" y="0" width="14" height="12" fill="#8a8a8a"/><rect x="0" y="0" width="14" height="3" fill="#a6a6a6"/><rect x="0" y="3" width="14" height="1" fill="#555"/></svg>
<svg class="a" style="left:996px;top:12px" width="13" height="13" viewBox="0 0 13 13"><path d="M1 0.8 L12 11.6 M12 0.8 L1 11.6" stroke="#b6b6b6" stroke-width="2" fill="none"/></svg>
<div style="position:absolute;left:1px;top:52px;width:258px;height:2000px;box-sizing:border-box;border-left:2px solid #fff;border-top:1px solid #fff;border-right:2px solid #696969;border-right-color:#696969;background:#d3d3d3"></div>
<div style="position:absolute;left:257px;top:53px;width:1px;height:2000px;background:#a0a0a0"></div>
<div style="position:absolute;left:99px;top:34px;width:79px;height:18px;box-sizing:border-box;border-left:1px solid #fff;border-top:1px solid #fff;border-right:2px solid #696969;background:#d3d3d3"></div>
<div style="position:absolute;left:176px;top:35px;width:1px;height:17px;background:#a0a0a0"></div>
<div class="t" style="left:103.40px;top:40.69px;font:11px/1 'Liberation Sans',sans-serif;color:#000;letter-spacing:-0.343px;">Local Playback</div>
<div style="position:absolute;left:1px;top:32px;width:98px;height:22px;box-sizing:border-box;border-left:2px solid #fff;border-top:1px solid #fff;border-right:2px solid #696969;background:#d3d3d3"></div>
<div style="position:absolute;left:97px;top:33px;width:1px;height:20px;background:#a0a0a0"></div>
<div class="t" style="left:5.10px;top:38.69px;font:11px/1 'Liberation Sans',sans-serif;color:#000;letter-spacing:-0.221px;">Remote Playback</div>
<div class="t" style="left:6.50px;top:71.69px;font:11px/1 'Liberation Sans',sans-serif;color:#000;letter-spacing:-0.304px;">Device</div>
<div class="combo" style="left:76px;top:68px;width:176px;height:21px"><div class="cbtn"></div><div class="t" style="left:3.00px;top:4.89px;font:11px/1 'Liberation Sans',sans-serif;color:#000;letter-spacing:-0.299px;">View Camera</div></div>
<div class="t" style="left:8.80px;top:98.79px;font:11px/1 'Liberation Sans',sans-serif;color:#000;letter-spacing:-0.293px;">Channel</div>
<div class="combo" style="left:76px;top:96px;width:176px;height:21px"><div class="cbtn"></div><div class="t" style="left:3.00px;top:4.89px;font:11px/1 'Liberation Sans',sans-serif;color:#000;letter-spacing:-0.382px;">CAM1</div></div>
<div style="position:absolute;left:5px;top:129px;width:251px;height:31px;overflow:hidden"><div class="grp2" style="left:0;top:0;width:270px;height:29px"></div></div>
<div style="position:absolute;left:10px;top:124px;width:63px;height:10px;background:#d3d3d3"></div>
<div class="t" style="left:12.60px;top:123.99px;font:11px/1 'Liberation Sans',sans-serif;color:#000;letter-spacing:-0.213px;">Query Mode</div>
<svg class="a" style="left:10.5px;top:138.5px" width="13" height="13" viewBox="0 0 13 13"><circle cx="6.5" cy="6.5" r="5.5" fill="#fff" stroke="#a0a0a0"/><path d="M2.3 10.2 A5.5 5.5 0 0 0 10.7 2.6" fill="none" stroke="#fff" stroke-width="1"/><path d="M3 9.6 A4.6 4.6 0 0 1 9.6 3" fill="none" stroke="#696969" stroke-width="1"/><circle cx="6.5" cy="6.5" r="2" fill="#000"/></svg>
<div class="t" style="left:27.00px;top:140.69px;font:11px/1 'Liberation Sans',sans-serif;color:#000;letter-spacing:-0.464px;">By Name</div>
<svg class="a" style="left:150.5px;top:138.5px" width="13" height="13" viewBox="0 0 13 13"><circle cx="6.5" cy="6.5" r="5.5" fill="#fff" stroke="#a0a0a0"/><path d="M2.3 10.2 A5.5 5.5 0 0 0 10.7 2.6" fill="none" stroke="#fff" stroke-width="1"/><path d="M3 9.6 A4.6 4.6 0 0 1 9.6 3" fill="none" stroke="#696969" stroke-width="1"/></svg>
<div class="t" style="left:167.00px;top:140.69px;font:11px/1 'Liberation Sans',sans-serif;color:#000;letter-spacing:-0.391px;">By Time</div>
<div style="position:absolute;left:6px;top:169px;width:250px;height:129px;overflow:hidden"><div class="grp2" style="left:0;top:0;width:270px;height:127px"></div></div>
<div style="position:absolute;left:12px;top:164px;width:59px;height:10px;background:#d3d3d3"></div>
<div class="t" style="left:14.00px;top:163.99px;font:11px/1 'Liberation Sans',sans-serif;color:#000;letter-spacing:-0.224px;">MultiReplay</div>
<div class="sunk" style="left:13px;top:177px;width:148px;height:114px"></div>
<div class="sunk" style="left:163px;top:178px;width:13px;height:13px;background:#e4e4e4"></div>
<div class="t" style="left:182.00px;top:180.89px;font:11px/1 'Liberation Sans',sans-serif;color:#fff;letter-spacing:-0.225px;">Select All</div><div class="t" style="left:181.00px;top:179.89px;font:11px/1 'Liberation Sans',sans-serif;color:#a0a0a0;letter-spacing:-0.225px;">Select All</div>
<div class="sunk" style="left:163px;top:204px;width:13px;height:13px;background:#e4e4e4"></div>
<div class="t" style="left:182.00px;top:206.89px;font:11px/1 'Liberation Sans',sans-serif;color:#fff;letter-spacing:-0.202px;">Synchronous</div><div class="t" style="left:181.00px;top:205.89px;font:11px/1 'Liberation Sans',sans-serif;color:#a0a0a0;letter-spacing:-0.202px;">Synchronous</div>
<div class="btn" style="left:162px;top:247px;width:89px;height:20px"><div class="t" style="left:35.20px;top:4.69px;font:11px/1 'Liberation Sans',sans-serif;color:#fff;letter-spacing:-0.326px;">Add</div><div class="t" style="left:34.20px;top:3.69px;font:11px/1 'Liberation Sans',sans-serif;color:#a0a0a0;letter-spacing:-0.326px;">Add</div></div>
<div class="btn" style="left:162px;top:273px;width:90px;height:20px"><div class="t" style="left:29.90px;top:4.69px;font:11px/1 'Liberation Sans',sans-serif;color:#fff;letter-spacing:-0.265px;">Delete</div><div class="t" style="left:28.90px;top:3.69px;font:11px/1 'Liberation Sans',sans-serif;color:#a0a0a0;letter-spacing:-0.265px;">Delete</div></div>
<div class="t" style="left:10.00px;top:311.09px;font:11px/1 'Liberation Sans',sans-serif;color:#000;letter-spacing:-0.298px;">Type</div>
<div class="combo" style="left:83px;top:304px;width:170px;height:20px"><div class="cbtn"></div><div class="t" style="left:2.40px;top:5.09px;font:11px/1 'Liberation Sans',sans-serif;color:#000;letter-spacing:-0.235px;">All videos</div></div>
<div class="t" style="left:9.50px;top:332.99px;font:11px/1 'Liberation Sans',sans-serif;color:#000;letter-spacing:-0.281px;">Begin</div>
<div class="combo" style="left:83px;top:327px;width:78px;height:20px"><div class="t" style="left:7.00px;top:3.99px;font:11px/1 'Liberation Sans',sans-serif;color:#000;letter-spacing:0.229px;">9/19/2014</div><div class="cbtn" style="width:15px"></div></div>
<div class="combo" style="left:163px;top:327px;width:90px;height:20px"><div class="t" style="left:8.60px;top:3.99px;font:11px/1 'Liberation Sans',sans-serif;color:#000;letter-spacing:-0.006px;">1:00:00 AM</div><div class="btn" style="right:0px;top:1px;width:16px;height:8px;box-shadow:none"></div><div class="btn" style="right:0px;top:9px;width:16px;height:8px;box-shadow:none"></div><div class="a" style="right:6px;top:4px;border:2px solid transparent;border-bottom:2px solid #000;border-top:0"></div><div class="a" style="right:6px;top:12px;border:2px solid transparent;border-top:2px solid #000;border-bottom:0"></div></div>
<div class="t" style="left:11.70px;top:358.09px;font:11px/1 'Liberation Sans',sans-serif;color:#000;letter-spacing:-0.326px;">End</div>
<div class="combo" style="left:83px;top:353px;width:78px;height:20px"><div class="t" style="left:7.00px;top:3.99px;font:11px/1 'Liberation Sans',sans-serif;color:#000;letter-spacing:0.229px;">9/19/2014</div><div class="cbtn" style="width:15px"></div></div>
<div class="combo" style="left:163px;top:353px;width:90px;height:20px"><div class="t" style="left:4.20px;top:3.99px;font:11px/1 'Liberation Sans',sans-serif;color:#000;letter-spacing:-0.142px;">11:59:59 PM</div><div class="btn" style="right:0px;top:1px;width:16px;height:8px;box-shadow:none"></div><div class="btn" style="right:0px;top:9px;width:16px;height:8px;box-shadow:none"></div><div class="a" style="right:6px;top:4px;border:2px solid transparent;border-bottom:2px solid #000;border-top:0"></div><div class="a" style="right:6px;top:12px;border:2px solid transparent;border-top:2px solid #000;border-bottom:0"></div></div>
<div class="a" style="left:15px;top:377px;width:75px;height:20px;box-sizing:border-box;border:1px solid #000"><div class="btn" style="left:0;top:0;width:73px;height:18px"></div><div class="t" style="left:19.94px;top:3.69px;font:11px/1 'Liberation Sans',sans-serif;color:#000;letter-spacing:-0.290px;">Search</div></div>
<div class="btn" style="left:96px;top:377px;width:75px;height:20px"><div class="t" style="left:26.33px;top:3.69px;font:11px/1 'Liberation Sans',sans-serif;color:#000;letter-spacing:-0.268px;">Play</div></div>
<div class="btn" style="left:177px;top:377px;width:75px;height:20px"><div class="t" style="left:13.26px;top:3.69px;font:11px/1 'Liberation Sans',sans-serif;color:#000;letter-spacing:-0.306px;">Download</div></div>
<div class="btn" style="left:16px;top:400px;width:75px;height:20px"><div class="t" style="left:18.61px;top:4.69px;font:11px/1 'Liberation Sans',sans-serif;color:#fff;letter-spacing:-0.331px;">PageUp</div><div class="t" style="left:17.61px;top:3.69px;font:11px/1 'Liberation Sans',sans-serif;color:#a0a0a0;letter-spacing:-0.331px;">PageUp</div></div>
<div class="btn" style="left:96px;top:400px;width:75px;height:20px"><div class="t" style="left:11.93px;top:4.69px;font:11px/1 'Liberation Sans',sans-serif;color:#fff;letter-spacing:-0.336px;">PageDown</div><div class="t" style="left:10.93px;top:3.69px;font:11px/1 'Liberation Sans',sans-serif;color:#a0a0a0;letter-spacing:-0.336px;">PageDown</div></div>
<div class="sunk" style="left:8px;top:421px;width:244px;height:400px"></div>
<div style="position:absolute;left:10px;top:423px;width:39px;height:16px;box-sizing:border-box;background:#f0f0f0;border-bottom:1px solid #a0a0a0;border-right:1px solid #a0a0a0;border-top:1px solid #fff;border-left:1px solid #fff"></div>
<div style="position:absolute;left:49px;top:423px;width:201px;height:16px;box-sizing:border-box;background:#f0f0f0;border-bottom:1px solid #a0a0a0;border-right:1px solid #a0a0a0;border-top:1px solid #fff;border-left:1px solid #fff"></div>
<div class="t" style="left:14.00px;top:426.09px;font:11px/1 'Liberation Sans',sans-serif;color:#000;letter-spacing:-0.413px;">NO</div>
<div class="t" style="left:54.00px;top:426.09px;font:11px/1 'Liberation Sans',sans-serif;color:#000;letter-spacing:-0.222px;">File</div>
<div style="position:absolute;left:27px;top:441px;width:223px;height:16px;background:#3399ff;overflow:hidden"><div class="t" style="left:2.60px;top:3.49px;font:11px/1 'Liberation Sans',sans-serif;color:#fff;letter-spacing:-0.306px;">1</div><div class="t" style="left:28.30px;top:3.49px;font:11px/1 'Liberation Sans',sans-serif;color:#fff;letter-spacing:-0.016px;">19-09-2014 01:00:00-01:13:06(56384KB</div></div>
<svg class="a" style="left:13px;top:443px" width="13" height="13" viewBox="0 0 13 13"><rect x="0.5" y="0.5" width="12" height="12" fill="#fff" stroke="#707070"/><rect x="1.5" y="1.5" width="10" height="10" fill="none" stroke="#696969"/><path d="M3 6 L5.5 8.5 L10 3.5" stroke="#000" stroke-width="2" fill="none"/></svg>
<div class="t" style="left:270.00px;top:45.03px;font:32.1px/1 'DejaVu Sans',sans-serif;color:#ed1c24;transform-origin:0 0;transform:scaleX(1);">1</div>
<div class="t" style="left:274.00px;top:94.73px;font:32.1px/1 'DejaVu Sans',sans-serif;color:#ed1c24;transform-origin:0 0;transform:scaleX(0.95);">2</div>
<div class="t" style="left:84.50px;top:130.73px;font:32.1px/1 'DejaVu Sans',sans-serif;color:#ed1c24;transform-origin:0 0;transform:scaleX(0.93);">3</div>
<div class="t" style="left:277.00px;top:301.11px;font:31.41px/1 'DejaVu Sans',sans-serif;color:#ed1c24;transform-origin:0 0;transform:scaleX(0.95);">4</div>
<div class="t" style="left:63.50px;top:323.88px;font:30.86px/1 'DejaVu Sans',sans-serif;color:#ed1c24;transform-origin:0 0;transform:scaleX(0.95);">5</div>
<div class="t" style="left:277.30px;top:347.72px;font:27.85px/1 'DejaVu Sans',sans-serif;color:#ed1c24;transform-origin:0 0;transform:scaleX(0.95);">6</div>
</div>
<div style="position:absolute;left:169px;top:319px;width:3px;height:192px;background:#3c3c3c"></div>
<svg class="a" style="left:167px;top:406px" width="6" height="14" viewBox="0 0 6 14"><path d="M5 1 L1.5 7 L5 13" stroke="#fff" stroke-width="1.6" fill="none"/></svg>
<div class="a" style="left:471px;top:32px;width:683px;height:512px;background:#707070;box-sizing:border-box;border:2px solid #000">
<div style="position:absolute;left:339px;top:0px;width:2px;height:508px;background:#000"></div>
<div style="position:absolute;left:0px;top:254px;width:679px;height:2px;background:#000"></div>
<div class="a" style="left:0;top:0;width:340px;height:255px;box-sizing:border-box;border:1px solid #30f030;overflow:hidden">
<svg class="a" style="left:0;top:0" width="338" height="253" viewBox="0 0 338 253"><defs><filter id="bl" x="-5%" y="-5%" width="110%" height="110%"><feGaussianBlur stdDeviation="0.9"/></filter><filter id="bl2" x="-20%" y="-20%" width="140%" height="140%"><feGaussianBlur stdDeviation="2.2"/></filter><linearGradient id="wallg" x1="0" y1="0" x2="1" y2="0"><stop offset="0" stop-color="#b0b0b0"/><stop offset="0.5" stop-color="#c2c2c2"/><stop offset="1" stop-color="#d0d0d0"/></linearGradient><linearGradient id="floorg" x1="0" y1="0" x2="0" y2="1"><stop offset="0" stop-color="#8e8e8e"/><stop offset="0.5" stop-color="#9e9e9e"/><stop offset="1" stop-color="#a6a6a6"/></linearGradient></defs><rect width="338" height="253" fill="url(#floorg)"/><g filter="url(#bl)"><polygon points="-4.0,-3.0 135.5,-3.0 175.4,140.9 172.0,156.1 -4.0,156.1" fill="url(#wallg)" /><polygon points="-4.0,-3.0 107.7,-3.0 78.9,13.2 40.0,30.2 -4.0,52.9" fill="#f1f1f1" /><line x1="107.7" y1="-0.3" x2="-4.0" y2="53.2" stroke="#8a8a8a" stroke-width="0.8"/><line x1="-0.6" y1="83.3" x2="24.8" y2="142.6" stroke="#3a3a3a" stroke-width="1.3"/><polygon points="133.7,0.0 338.0,0.0 338.0,150.0 176.0,150.0 172.3,132.0" fill="#6a6a6a" /><polygon points="135.0,0.0 186.0,0.0 199.0,68.0 193.0,80.0 178.0,86.0 170.0,100.0 172.0,131.0 166.0,110.0" fill="#2c2c2c" /><line x1="152.5" y1="0.0" x2="176.4" y2="86.5" stroke="#c4c4c4" stroke-width="1.4"/><line x1="167.0" y1="0.0" x2="183.0" y2="52.0" stroke="#b4b4b4" stroke-width="1.2"/><line x1="178.0" y1="0.0" x2="192.0" y2="50.0" stroke="#9a9a9a" stroke-width="1.0"/><line x1="141.0" y1="27.0" x2="187.0" y2="9.0" stroke="#a4a4a4" stroke-width="1.3"/><line x1="149.0" y1="55.0" x2="190.0" y2="33.0" stroke="#a4a4a4" stroke-width="1.3"/><line x1="158.0" y1="84.0" x2="176.0" y2="74.0" stroke="#8a8a8a" stroke-width="1.2"/><polygon points="133.7,0.0 136.5,0.0 175.0,132.0 172.3,132.0" fill="#8e8e8e" /><polygon points="186.0,0.0 216.0,0.0 220.0,108.0 199.0,108.0 199.0,68.0" fill="#606060" /><polygon points="188.0,20.0 205.0,22.0 204.0,70.0 197.0,66.0" fill="#4a4a4a" /><line x1="206.6" y1="1.0" x2="216.0" y2="107.0" stroke="#cfcfcf" stroke-width="1.3"/><polygon points="168.0,82.0 199.0,80.0 202.0,104.0 172.0,104.0" fill="#363636" /><polygon points="178.0,75.0 199.0,72.0 200.0,82.0 180.0,86.0" fill="#b0b0b0" /><polygon points="181.0,52.0 190.0,50.0 190.0,72.0 182.0,74.0" fill="#a0a0a0" /><polygon points="193.0,91.0 202.0,89.0 206.0,114.0 198.0,116.0" fill="#c6c6c6" /><polygon points="201.0,110.0 220.0,106.0 223.0,112.0 206.0,119.0" fill="#cacaca" /><polygon points="172.0,104.0 202.0,104.0 204.0,130.0 176.0,132.0" fill="#707070" /><line x1="176.0" y1="106.0" x2="178.0" y2="130.0" stroke="#b0b0b0" stroke-width="1.2"/><line x1="183.0" y1="106.0" x2="184.0" y2="128.0" stroke="#a8a8a8" stroke-width="1.0"/><polygon points="216.0,0.0 314.0,0.0 314.0,62.0 216.0,64.0" fill="#565656" /><polygon points="216.0,0.0 314.0,0.0 314.0,10.0 216.0,12.0" fill="#464646" /><polygon points="226.0,8.0 231.0,8.0 231.0,57.0 226.0,57.0" fill="#8a8a8a" /><polygon points="233.0,8.0 237.0,8.0 237.0,57.0 233.0,57.0" fill="#7a7a7a" /><polygon points="243.0,8.0 258.0,8.0 258.0,57.0 243.0,57.0" fill="#444" /><polygon points="261.0,8.0 273.0,8.0 273.0,57.0 261.0,57.0" fill="#474747" /><polygon points="279.0,8.0 287.0,8.0 287.0,57.0 279.0,57.0" fill="#6a6a6a" /><polygon points="296.0,8.0 302.0,8.0 302.0,57.0 296.0,57.0" fill="#707070" /><polygon points="216.0,62.0 256.0,60.0 252.0,140.0 176.0,150.0 176.0,132.0 204.0,130.0 220.0,108.0" fill="#767676" /><polygon points="204.0,118.0 250.0,112.0 252.0,140.0 200.0,146.0" fill="#828282" /><polygon points="314.0,0.0 338.0,0.0 338.0,141.0 319.0,141.0 320.0,76.0 314.0,60.0" fill="#b4b4b4" /><polygon points="318.0,32.0 338.0,42.0 338.0,77.0 326.0,74.0 319.0,56.0" fill="#484848" /><polygon points="322.0,40.0 336.0,48.0 336.0,70.0 327.0,67.0" fill="#7c7c7c" /><polygon points="258.0,60.0 320.0,60.0 320.0,146.0 282.0,146.0 252.0,137.0 251.0,108.0 256.0,88.0" fill="#343434" /><polygon points="259.0,62.0 320.0,62.0 320.0,76.0 286.0,77.0 262.0,72.0" fill="#686868" /><line x1="257.7" y1="71.5" x2="284.8" y2="71.5" stroke="#f0f0f0" stroke-width="1.8"/><polygon points="286.0,77.0 320.0,76.0 320.0,80.0 286.0,81.0" fill="#9c9c9c" /><polygon points="266.0,103.0 320.0,103.0 320.0,108.0 266.0,108.5" fill="#9a9a9a" /><ellipse cx="272.0" cy="92.0" rx="6.5" ry="9.5" fill="#484848"/><ellipse cx="288.0" cy="91.0" rx="6.5" ry="9.5" fill="#484848"/><ellipse cx="303.0" cy="92.0" rx="6.5" ry="9.5" fill="#484848"/><ellipse cx="316.0" cy="92.0" rx="6.5" ry="9.5" fill="#484848"/><ellipse cx="258.0" cy="118.0" rx="6.5" ry="9.5" fill="#484848"/><ellipse cx="273.0" cy="120.0" rx="6.5" ry="9.5" fill="#484848"/><ellipse cx="289.0" cy="127.0" rx="6.5" ry="9.5" fill="#484848"/><ellipse cx="305.0" cy="128.0" rx="6.5" ry="9.5" fill="#484848"/><ellipse cx="317.0" cy="126.0" rx="6.5" ry="9.5" fill="#484848"/><ellipse cx="272.0" cy="88.0" rx="3" ry="3.5" fill="#6e6e6e"/><ellipse cx="288.0" cy="87.0" rx="3" ry="3.5" fill="#6e6e6e"/><ellipse cx="303.0" cy="88.0" rx="3" ry="3.5" fill="#6e6e6e"/><ellipse cx="258.0" cy="112.0" rx="3" ry="3.5" fill="#6e6e6e"/><ellipse cx="273.0" cy="116.0" rx="3" ry="3.5" fill="#6e6e6e"/><ellipse cx="276.0" cy="50.0" rx="5" ry="8" fill="#3a3a3a"/><ellipse cx="291.0" cy="52.0" rx="5" ry="8" fill="#3a3a3a"/><ellipse cx="305.0" cy="56.0" rx="5" ry="8" fill="#3a3a3a"/><ellipse cx="313.0" cy="58.0" rx="5" ry="8" fill="#3a3a3a"/><polygon points="51.9,136.5 116.2,117.9 127.3,124.6 107.7,156.1 68.8,155.4" fill="#ababab" /><line x1="65.4" y1="155.4" x2="107.7" y2="156.1" stroke="#2c2c2c" stroke-width="2.2"/><polygon points="51.9,115.5 62.0,106.0 97.6,102.6 104.3,121.6 77.2,133.1 58.6,135.1" fill="#484848" /><ellipse cx="58.6" cy="121.6" rx="5.8" ry="8.1" fill="#3c3c3c"/><ellipse cx="72.2" cy="119.5" rx="5.8" ry="8.1" fill="#3c3c3c"/><ellipse cx="84.7" cy="113.8" rx="5.8" ry="8.1" fill="#3c3c3c"/><ellipse cx="94.8" cy="112.1" rx="5.8" ry="8.1" fill="#3c3c3c"/><polygon points="68.8,155.4 107.7,156.1 112.8,213.7 107.7,251.6 158.5,251.6 172.0,213.7 121.3,196.7" fill="#9b9b9b" /><polygon points="-4.0,143.2 46.8,140.9 68.8,162.2 77.2,171.3 107.7,186.6 112.8,213.7 118.5,221.1 107.7,252.6 -4.0,252.6" fill="#303030" /><polygon points="69.8,165.0 77.3,166.0 43.5,232.0 31.5,231.0" fill="#b2b2b2" /><polygon points="89.8,193.3 97.3,194.5 74.8,252.0 64.8,252.0" fill="#a9a9a9" /><polygon points="109.0,218.3 118.2,221.7 105.7,252.0 99.0,252.0" fill="#1c1c1c" /><ellipse cx="46.8" cy="159.5" rx="10.2" ry="12.2" fill="#3a3a3a"/><ellipse cx="56.9" cy="186.6" rx="10.2" ry="12.2" fill="#3a3a3a"/><ellipse cx="23.1" cy="200.1" rx="10.2" ry="12.2" fill="#3a3a3a"/><ellipse cx="40.0" cy="179.8" rx="10.2" ry="12.2" fill="#3a3a3a"/><ellipse cx="77.2" cy="191.7" rx="10.2" ry="12.2" fill="#3a3a3a"/><ellipse cx="94.2" cy="184.9" rx="10.2" ry="12.2" fill="#3a3a3a"/><ellipse cx="68.8" cy="213.7" rx="10.2" ry="12.2" fill="#3a3a3a"/><ellipse cx="100.9" cy="215.3" rx="10.2" ry="12.2" fill="#3a3a3a"/><ellipse cx="87.4" cy="234.0" rx="10.2" ry="12.2" fill="#3a3a3a"/><ellipse cx="16.3" cy="169.6" rx="10.2" ry="12.2" fill="#3a3a3a"/><ellipse cx="28.2" cy="156.1" rx="10.2" ry="12.2" fill="#3a3a3a"/><rect x="50.7" y="156.7" width="15.0" height="10.0" rx="3" fill="#9a9a9a" transform="rotate(-22 58.2 161.7)"/><rect x="44.0" y="180.0" width="13.3" height="10.8" rx="3" fill="#8c8c8c" transform="rotate(-22 50.7 185.4)"/><rect x="20.7" y="196.7" width="14.2" height="10.8" rx="3" fill="#8a8a8a" transform="rotate(-22 27.8 202.1)"/><rect x="15.7" y="209.2" width="13.3" height="9.2" rx="3" fill="#7c7c7c" transform="rotate(-22 22.3 213.8)"/><rect x="69.0" y="188.3" width="13.3" height="10.0" rx="3" fill="#868686" transform="rotate(-22 75.7 193.3)"/><rect x="59.0" y="208.3" width="11.7" height="6.7" rx="3" fill="#9a9a9a" transform="rotate(-22 64.8 211.7)"/><rect x="85.7" y="226.7" width="10.0" height="6.7" rx="3" fill="#808080" transform="rotate(-22 90.7 230.0)"/><rect x="5.7" y="175.0" width="11.7" height="8.3" rx="3" fill="#6c6c6c" transform="rotate(-22 11.5 179.2)"/><rect x="92.3" y="180.0" width="10.0" height="8.3" rx="3" fill="#6a6a6a" transform="rotate(-22 97.3 184.2)"/><polygon points="106.0,140.9 117.9,117.2 134.8,118.2 145.0,130.7 161.9,129.0 178.8,144.3 192.3,159.5 191.3,179.8 186.3,196.7 165.3,200.8 159.2,213.7 141.6,216.0 120.6,197.4 114.5,166.3 103.7,156.1" fill="#333" /><ellipse cx="131.4" cy="173.0" rx="8.8" ry="11.5" fill="#444"/><ellipse cx="146.6" cy="200.1" rx="8.8" ry="11.5" fill="#444"/><ellipse cx="172.0" cy="186.6" rx="8.8" ry="11.5" fill="#444"/><ellipse cx="180.5" cy="159.5" rx="8.8" ry="11.5" fill="#444"/><ellipse cx="155.1" cy="146.0" rx="8.8" ry="11.5" fill="#444"/><ellipse cx="117.9" cy="146.0" rx="8.8" ry="11.5" fill="#444"/><ellipse cx="126.3" cy="127.3" rx="8.8" ry="11.5" fill="#444"/><polygon points="104.3,162.9 114.5,162.9 114.5,171.3 105.0,171.3" fill="#c0c0c0" /><polygon points="195.7,178.1 229.6,146.0 245.5,151.7 213.3,186.6" fill="#a6a6a6" stroke="#7e7e7e" stroke-width="0.8"/><polygon points="195.1,150.0 207.6,146.0 212.7,153.4 200.1,158.1" fill="#454545" /><polygon points="198.1,151.0 206.9,148.3 209.6,153.4 201.1,156.1" fill="#8a8a8a" /><polygon points="222.1,127.3 234.7,125.6 237.0,132.4 224.8,134.4" fill="#454545" /><polygon points="212.0,125.0 217.7,124.3 218.7,136.5 213.3,137.1" fill="#3c3c3c" /><line x1="207.6" y1="110.4" x2="209.9" y2="174.7" stroke="#bcbcbc" stroke-width="1.3"/><ellipse cx="302.4" cy="199.4" rx="11.2" ry="14.9" fill="#5e5e5e"/><ellipse cx="303.4" cy="183.9" rx="2.7" ry="2.7" fill="#d8d8d8"/><polygon points="293.9,210.3 314.2,208.6 314.9,220.4 294.6,221.1" fill="#8a8a8a" /><polygon points="315.9,142.6 339.6,142.6 339.6,213.7 321.0,213.7 323.7,186.6 315.9,184.9" fill="#a6a6a6" /><polygon points="314.2,193.3 322.7,193.3 325.0,230.6 315.9,230.6" fill="#7c7c7c" /><polygon points="277.7,252.6 281.0,236.3 339.6,230.6 339.6,252.6" fill="#6e6e6e" /><polygon points="283.7,239.0 339.6,234.0 339.6,238.0 284.4,243.4" fill="#8c8c8c" /></g><g fill="#e8e8e8"><circle cx="29.9" cy="158.8" r="1.5"/><circle cx="17.0" cy="173.0" r="1.5"/><circle cx="41.7" cy="144.3" r="1.5"/><circle cx="14.6" cy="191.7" r="1.5"/><circle cx="22.4" cy="213.7" r="1.5"/><circle cx="7.8" cy="218.7" r="1.5"/><circle cx="56.9" cy="184.9" r="1.5"/><circle cx="88.1" cy="173.7" r="1.5"/><circle cx="128.0" cy="161.2" r="1.5"/><circle cx="141.6" cy="190.6" r="1.5"/><circle cx="170.3" cy="173.0" r="1.5"/><circle cx="178.8" cy="146.6" r="1.5"/><circle cx="155.1" cy="163.6" r="1.5"/><circle cx="124.0" cy="135.8" r="1.5"/><circle cx="112.8" cy="134.1" r="1.5"/><circle cx="149.0" cy="175.4" r="1.5"/><circle cx="131.4" cy="181.5" r="1.5"/></g><rect x="212" y="15.2" width="97.5" height="11" fill="#4a4a4a" opacity=".75"/><text x="213.3" y="24.3" font-family="Liberation Sans, sans-serif" font-size="10.4" fill="#fff" textLength="95" lengthAdjust="spacingAndGlyphs" stroke="#fff" stroke-width=".25">2014-09-19 01.00.15</text><rect x="22.5" y="232" width="36" height="11" fill="#2e2e2e" opacity=".8"/><text x="23.8" y="241.2" font-family="Liberation Sans, sans-serif" font-size="10.4" fill="#fff" textLength="33.5" lengthAdjust="spacingAndGlyphs" stroke="#fff" stroke-width=".25">CAM01</text></svg>
</div></div>
<div style="position:absolute;left:430px;top:544px;width:764px;height:24px;background:linear-gradient(to bottom,#a4b8d4 0,#8aa0c0 3px,#5c7496 9px,#50688a 11px,#a9c0de 11px,#a9c0de 12px,#465b79 12px,#465b79 24px)"></div>
<div style="position:absolute;left:430px;top:544px;width:32px;height:24px;background:linear-gradient(to bottom,#9fb4d0 0,#6d86a8 6px,#465b79 12px,#465b79 24px)"></div>
<div style="position:absolute;left:1162px;top:544px;width:32px;height:24px;background:linear-gradient(to bottom,#9fb4d0 0,#6d86a8 6px,#465b79 12px,#465b79 24px)"></div>
<div style="position:absolute;left:462px;top:553px;width:13px;height:3px;background:#2c4060"></div>
<div style="position:absolute;left:475px;top:545px;width:6px;height:11px;background:#161616;border-radius:2px"></div>
<div style="position:absolute;left:430px;top:568px;width:764px;height:56px;background:linear-gradient(to bottom,#949494 0,#8a8a8a 30%,#6c6c6c 70%,#5e5e5e 100%)"></div>
<div style="position:absolute;left:519px;top:568px;width:585px;height:56px;box-sizing:border-box;border:3px solid #ed1c24"></div>
<svg class="a" style="left:430px;top:568px" width="764" height="56" viewBox="430 704 764 56"><defs><linearGradient id="pb" x1="0" y1="0" x2="0" y2="1"><stop offset="0" stop-color="#5a7696"/><stop offset="0.45" stop-color="#2e4664"/><stop offset="0.75" stop-color="#4c6888"/><stop offset="1" stop-color="#a4bcd6"/></linearGradient><linearGradient id="pr" x1="0" y1="0" x2="0" y2="1"><stop offset="0" stop-color="#a8c0dc"/><stop offset="0.5" stop-color="#7a94b4"/><stop offset="1" stop-color="#c8dcf0"/></linearGradient><linearGradient id="ph" x1="0" y1="0" x2="0" y2="1"><stop offset="0" stop-color="#8aa2c0" stop-opacity=".55"/><stop offset="1" stop-color="#5c7898" stop-opacity=".45"/></linearGradient></defs><circle cx="556" cy="731.3" r="23.3" fill="url(#pb)" stroke="url(#pr)" stroke-width="1.4"/><path d="M534.5 727.3 A21.8 21.8 0 0 1 577.5 727.3 Q556 737.3 534.5 727.3 Z" fill="url(#ph)"/><polygon points="551,720.8 551,741.8 565.5,731.3" fill="#fff"/><circle cx="641" cy="731.3" r="23.3" fill="url(#pb)" stroke="url(#pr)" stroke-width="1.4"/><path d="M619.5 727.3 A21.8 21.8 0 0 1 662.5 727.3 Q641 737.3 619.5 727.3 Z" fill="url(#ph)"/><rect x="636" y="722.8" width="3" height="16" rx="1" fill="#fff"/><rect x="642.5" y="722.8" width="3" height="16" rx="1" fill="#fff"/><circle cx="726" cy="731.3" r="23.3" fill="url(#pb)" stroke="url(#pr)" stroke-width="1.4"/><path d="M704.5 727.3 A21.8 21.8 0 0 1 747.5 727.3 Q726 737.3 704.5 727.3 Z" fill="url(#ph)"/><rect x="718" y="722.8" width="16.5" height="16" rx="1.5" fill="#fff"/><circle cx="811" cy="731.3" r="23.3" fill="url(#pb)" stroke="url(#pr)" stroke-width="1.4"/><path d="M789.5 727.3 A21.8 21.8 0 0 1 832.5 727.3 Q811 737.3 789.5 727.3 Z" fill="url(#ph)"/><rect x="803.5" y="720.3" width="1.6" height="22" fill="#fff"/><polygon points="807.5,721.3 807.5,741.3 822,731.3" fill="#fff"/><circle cx="896" cy="731.3" r="23.3" fill="url(#pb)" stroke="url(#pr)" stroke-width="1.4"/><path d="M874.5 727.3 A21.8 21.8 0 0 1 917.5 727.3 Q896 737.3 874.5 727.3 Z" fill="url(#ph)"/><polygon points="884,721.8 884,740.8 896,731.3" fill="#fff"/><polygon points="895,721.8 895,740.8 907.5,731.3" fill="#fff"/><circle cx="981" cy="731.3" r="23.3" fill="url(#pb)" stroke="url(#pr)" stroke-width="1.4"/><path d="M959.5 727.3 A21.8 21.8 0 0 1 1002.5 727.3 Q981 737.3 959.5 727.3 Z" fill="url(#ph)"/><rect x="968.5" y="721.3" width="1.6" height="20" fill="#fff"/><polygon points="981,722.8 981,739.8 970.5,731.3" fill="#fff"/><polygon points="991.5,722.8 991.5,739.8 981,731.3" fill="#fff"/><circle cx="1066" cy="731.3" r="23.3" fill="url(#pb)" stroke="url(#pr)" stroke-width="1.4"/><path d="M1044.5 727.3 A21.8 21.8 0 0 1 1087.5 727.3 Q1066 737.3 1044.5 727.3 Z" fill="url(#ph)"/><rect x="1077.5" y="721.3" width="1.6" height="20" fill="#fff"/><polygon points="1055.5,722.8 1055.5,739.8 1066,731.3" fill="#fff"/><polygon points="1066,722.8 1066,739.8 1076.5,731.3" fill="#fff"/></svg>
</div>
</body></html>
